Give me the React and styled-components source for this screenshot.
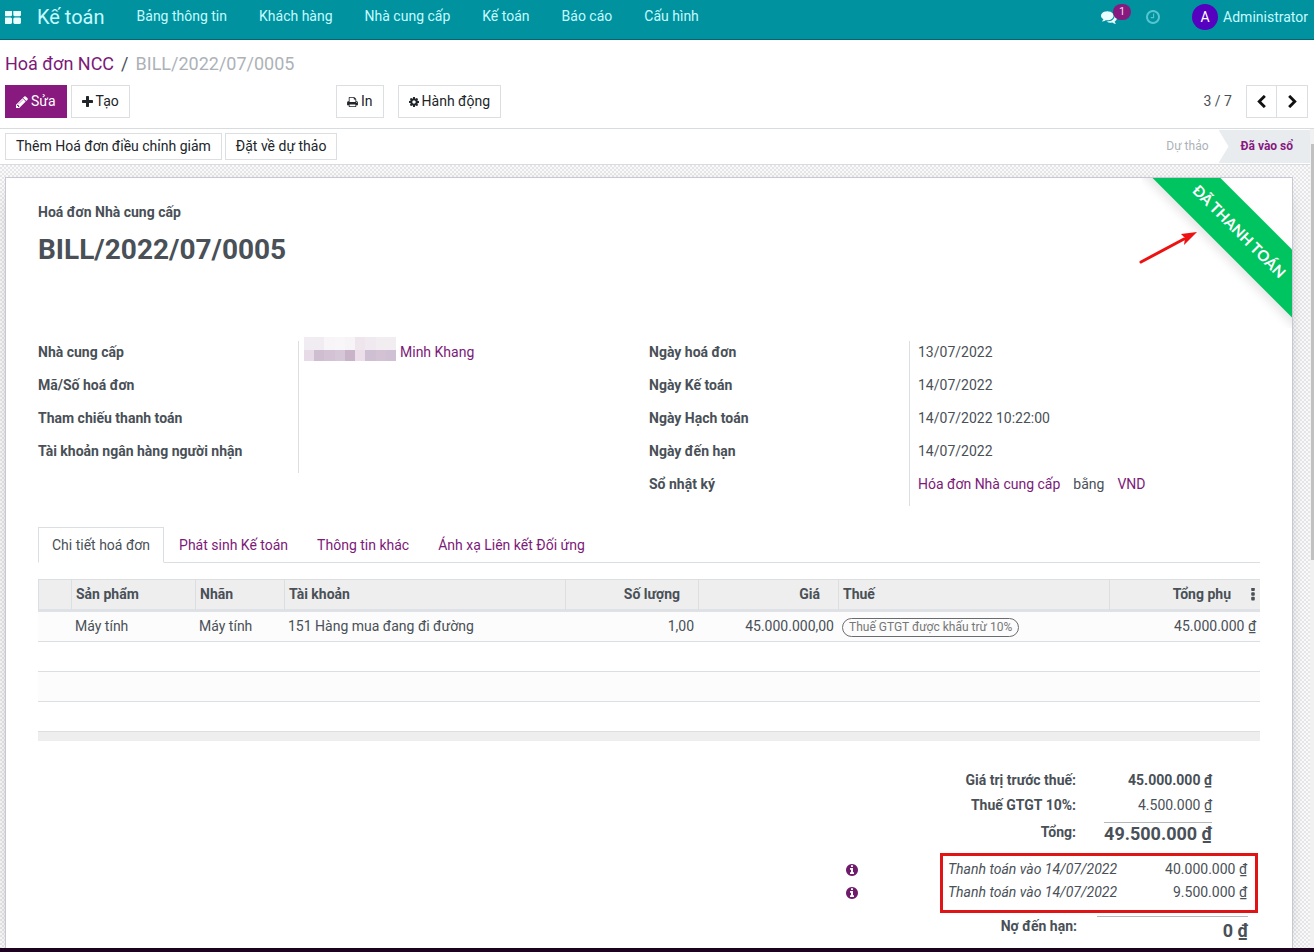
import React from 'react'
import styled, { createGlobalStyle } from 'styled-components'

const GlobalStyle = createGlobalStyle`
  * { box-sizing: border-box; }
  body {
    margin: 0;
    background: #ffffff;
    color: #495057;
    font-family: Roboto, "Noto Sans", sans-serif;
    font-size: 14px;
    line-height: 21px;
  }
  button { font: inherit; cursor: pointer; }
  a { color: #7c1a78; text-decoration: none; }
`

// Font Awesome 4 glyphs, drawn on the 1792 unit grid
const icons = {
  apps: { box: '128 256 1600 1280', d: 'M832 1024v384q0 52-38 90t-90 38h-512q-52 0-90-38t-38-90v-384q0-52 38-90t90-38h512q52 0 90 38t38 90zm0-768v384q0 52-38 90t-90 38h-512q-52 0-90-38t-38-90v-384q0-52 38-90t90-38h512q52 0 90 38t38 90zm896 768v384q0 52-38 90t-90 38h-512q-52 0-90-38t-38-90v-384q0-52 38-90t90-38h512q52 0 90 38t38 90zm0-768v384q0 52-38 90t-90 38h-512q-52 0-90-38t-38-90v-384q0-52 38-90t90-38h512q52 0 90 38t38 90z' },
  comments: { box: '0 256 1792 1408', d: 'M1408 768q0 139-94 257t-256.5 186.5-353.5 68.5q-86 0-176-16-124 88-278 128-36 9-86 16h-3q-11 0-20.5-8t-11.5-21q-1-3-1-6.5t.5-6.5 2-6l2.500-5 3.500-5.500 4-5 4.500-5 4-4.500q5-6 23-25t26-29.500 22.500-29 25-38.500 20.500-44q-124-72-195-177t-71-224q0-139 94-257t256.500-186.500 353.500-68.500 353.500 68.500 256.500 186.500 94 257zm384 256q0 120-71 224.500t-195 176.500q10 24 20.500 44t25 38.500 22.500 29 26 29.500 23 25q1 1 4 4.500t4.500 5 4 5 3.500 5.500l2.500 5 2 6 .5 6.500-1 6.500q-3 14-13 22t-22 7q-50-7-86-16-154-40-278-128-90 16-176 16-271 0-472-132 58 4 88 4 161 0 309-45t264-129q125-92 192-212t67-254q0-77-23-152 129 71 204 178t75 230z' },
  clock: { box: '128 128 1536 1536', d: 'M1024 544v448q0 14-9 23t-23 9h-320q-14 0-23-9t-9-23v-64q0-14 9-23t23-9h224v-352q0-14 9-23t23-9h64q14 0 23 9t9 23zm416 352q0-148-73-273t-198-198-273-73-273 73-198 198-73 273 73 273 198 198 273 73 273-73 198-198 73-273zm224 0q0 209-103 385.5t-279.5 279.5-385.5 103-385.5-103-279.5-279.5-103-385.5 103-385.5 279.5-279.5 385.5-103 385.5 103 279.5 279.5 103 385.5z' },
  pencil: { box: '128 128 1536 1536', d: 'M491 1536l91-91-235-235-91 91v107h128v128h107zm523-928q0-22-22-22-10 0-17 7l-542 542q-7 7-7 17 0 22 22 22 10 0 17-7l542-542q7-7 7-17zm-54-192l416 416-832 832h-416v-416zm683 96q0 53-37 90l-166 166-416-416 166-165q36-38 90-38 53 0 91 38l235 234q37 39 37 91z' },
  plus: { box: '192 128 1408 1408', d: 'M1600 736v192q0 40-28 68t-68 28h-416v416q0 40-28 68t-68 28h-192q-40 0-68-28t-28-68v-416h-416q-40 0-68-28t-28-68v-192q0-40 28-68t68-28h416v-416q0-40 28-68t68-28h192q40 0 68 28t28 68v416h416q40 0 68 28t28 68z' },
  print: { box: '64 128 1664 1536', d: 'M448 1536h896v-256h-896v256zm0-640h896v-384h-160q-40 0-68-28t-28-68v-160h-640v640zm1152 64q0-26-19-45t-45-19-45 19-19 45 19 45 45 19 45-19 19-45zm128 0v416q0 13-9.5 22.5t-22.5 9.5h-224v160q0 40-28 68t-68 28h-960q-40 0-68-28t-28-68v-160h-224q-13 0-22.5-9.5t-9.5-22.5v-416q0-79 56.5-135.5t135.5-56.5h64v-544q0-40 28-68t68-28h672q40 0 88 20t76 48l152 152q28 28 48 76t20 88v256h64q79 0 135.5 56.5t56.5 135.5z' },
  cog: { box: '128 128 1536 1536', d: 'M1152 896q0-106-75-181t-181-75-181 75-75 181 75 181 181 75 181-75 75-181zm512-109v222q0 12-8 23t-20 13l-185 28q-19 54-39 91 35 50 107 138 10 12 10 25t-9 23q-27 37-99 108t-94 71q-12 0-26-9l-138-108q-44 23-91 38-16 136-29 186-7 28-36 28h-222q-14 0-24.5-8.5t-11.5-21.5l-28-184q-49-16-90-37l-141 107q-10 9-25 9-14 0-25-11-126-114-165-168-7-10-7-23 0-12 8-23 15-21 51-66.5t54-70.5q-27-50-41-99l-183-27q-13-2-21-12.5t-8-23.5v-222q0-12 8-23t19-13l186-28q14-46 39-92-40-57-107-138-10-12-10-24 0-10 9-23 26-36 98.5-107.5t94.5-71.5q13 0 26 10l138 107q44-23 91-38 16-136 29-186 7-28 36-28h222q14 0 24.5 8.5t11.5 21.5l28 184q49 16 90 37l142-107q9-9 24-9 13 0 25 10 129 119 165 170 7 8 7 22 0 12-8 23-15 21-51 66.5t-54 70.5q26 50 41 98l183 28q13 2 21 12.5t8 23.5z' },
  left: { box: '410 26 1036 1612', d: 'M1427 301l-531 531 531 531q19 19 19 45t-19 45l-166 166q-19 19-45 19t-45-19l-742-742q-19-19-19-45t19-45l742-742q19-19 45-19t45 19l166 166q19 19 19 45t-19 45z' },
  right: { box: '346 26 1036 1612', d: 'M1363 877l-742 742q-19 19-45 19t-45-19l-166-166q-19-19-19-45t19-45l531-531-531-531q-19-19-19-45t19-45l166-166q19-19 45-19t45 19l742 742q19 19 19 45t-19 45z' },
  info: { box: '128 128 1536 1536', d: 'M1152 1376v-160q0-14-9-23t-23-9h-96v-512q0-14-9-23t-23-9h-320q-14 0-23 9t-9 23v160q0 14 9 23t23 9h96v320h-96q-14 0-23 9t-9 23v160q0 14 9 23t23 9h448q14 0 23-9t9-23zm-128-896v-160q0-14-9-23t-23-9h-192q-14 0-23 9t-9 23v160q0 14 9 23t23 9h192q14 0 23-9t9-23zm640 416q0 209-103 385.5t-279.5 279.5-385.5 103-385.5-103-279.5-279.5-103-385.5 103-385.5 279.5-279.5 385.5-103 385.5 103 279.5 279.5 103 385.5z' },
  more: { box: '704 192 384 1408', d: 'M1088 1248v192q0 40-28 68t-68 28h-192q-40 0-68-28t-28-68v-192q0-40 28-68t68-28h192q40 0 68 28t28 68zm0-512v192q0 40-28 68t-68 28h-192q-40 0-68-28t-28-68v-192q0-40 28-68t68-28h192q40 0 68 28t28 68zm0-512v192q0 40-28 68t-68 28h-192q-40 0-68-28t-28-68v-192q0-40 28-68t68-28h192q40 0 68 28t28 68z' },
}

const Icon = ({ name, width, height }) => (
  <svg width={width} height={height || width} viewBox={icons[name].box} fill="currentColor" aria-hidden="true">
    <path d={icons[name].d} />
  </svg>
)

const menus = ['Bảng thông tin', 'Khách hàng', 'Nhà cung cấp', 'Kế toán', 'Báo cáo', 'Cấu hình']

const tabs = ['Chi tiết hoá đơn', 'Phát sinh Kế toán', 'Thông tin khác', 'Ánh xạ Liên kết Đối ứng']

const payments = [
  { label: 'Thanh toán vào 14/07/2022', amount: '40.000.000 ₫' },
  { label: 'Thanh toán vào 14/07/2022', amount: '9.500.000 ₫' },
]

const mosaicTop = ['#f1ecf1', '#f1ecf1', '#f7f5f8', '#f8f6f9', '#f7f4f8', '#eee6ec', '#f0eaf0', '#f1edf1', '#f1edf1']
const mosaicBottom = ['#e6dbe6', '#cfbdd0', '#d2c2d4', '#d6c7d8', '#c8b3c9', '#ecdfea', '#cfbfd2', '#d2c2d4', '#d0c0d3']

const App = () => {
  return (
    <Shell>
      <GlobalStyle />
      <Navbar>
        <AppsButton aria-label="Ứng dụng"><Icon name="apps" width={16} height={13} /></AppsButton>
        <Brand href="#">Kế toán</Brand>
        <Menu>
          {menus.map((item) => <MenuLink href="#" key={item}>{item}</MenuLink>)}
        </Menu>
        <Systray>
          <Messages aria-label="Tin nhắn">
            <Icon name="comments" width={16} height={13} />
            <Counter>1</Counter>
          </Messages>
          <Activities aria-label="Hoạt động"><Icon name="clock" width={14} /></Activities>
          <User>
            <Avatar>A</Avatar>
            Administrator
          </User>
        </Systray>
      </Navbar>

      <ControlPanel>
        <Breadcrumb>
          <a href="#">Hoá đơn NCC</a>
          <span>/</span>
          <Current>BILL/2022/07/0005</Current>
        </Breadcrumb>
        <Toolbar>
          <Group>
            <Button $primary><Icon name="pencil" width={12} />Sửa</Button>
            <Button><Icon name="plus" width={11} />Tạo</Button>
          </Group>
          <Group $gap={14}>
            <Button><Icon name="print" width={11} height={10} />In</Button>
            <Button><Icon name="cog" width={10} />Hành động</Button>
          </Group>
          <Pager>
            3 / 7
            <PagerButtons>
              <PagerButton aria-label="Trước"><Icon name="left" width={9} height={13} /></PagerButton>
              <PagerButton aria-label="Sau"><Icon name="right" width={9} height={13} /></PagerButton>
            </PagerButtons>
          </Pager>
        </Toolbar>
      </ControlPanel>

      <Content>
        <FormView>
          <Statusbar>
            <StatusButton>Thêm Hoá đơn điều chỉnh giảm</StatusButton>
            <StatusButton>Đặt về dự thảo</StatusButton>
            <Steps>
              <Step>Dự thảo</Step>
              <Step $active>Đã vào sổ</Step>
            </Steps>
          </Statusbar>

          <SheetArea>
            <Sheet>
              <RibbonCorner><Ribbon>ĐÃ THANH TOÁN</Ribbon></RibbonCorner>
              <Arrow width="60" height="36" viewBox="0 0 60 36" aria-hidden="true">
                <path d="M3 33L46 10" stroke="#ee1111" strokeWidth="3" strokeLinecap="round" />
                <path d="M59 3L43 5L47 9L46 16Z" fill="#ee1111" />
              </Arrow>

              <Kind>Hoá đơn Nhà cung cấp</Kind>
              <Title>BILL/2022/07/0005</Title>

              <Groups>
                <Fields>
                  <Label>Nhà cung cấp</Label>
                  <Value $partner>
                    <Mosaic>
                      {[...mosaicTop, ...mosaicBottom].map((color, i) => <i key={i} style={{ background: color }} />)}
                    </Mosaic>
                    <a href="#">Minh Khang</a>
                  </Value>
                  <Label>Mã/Số hoá đơn</Label>
                  <Value />
                  <Label>Tham chiếu thanh toán</Label>
                  <Value />
                  <Label>Tài khoản ngân hàng người nhận</Label>
                  <Value />
                </Fields>
                <Fields>
                  <Label>Ngày hoá đơn</Label>
                  <Value>13/07/2022</Value>
                  <Label>Ngày Kế toán</Label>
                  <Value>14/07/2022</Value>
                  <Label>Ngày Hạch toán</Label>
                  <Value>14/07/2022 10:22:00</Value>
                  <Label>Ngày đến hạn</Label>
                  <Value>14/07/2022</Value>
                  <Label>Sổ nhật ký</Label>
                  <Value>
                    <a href="#">Hóa đơn Nhà cung cấp</a>
                    <span>bằng</span>
                    <a href="#">VND</a>
                  </Value>
                </Fields>
              </Groups>

              <Tabs>
                {tabs.map((tab, i) => <Tab href="#" key={tab} $active={i === 0}>{tab}</Tab>)}
              </Tabs>

              <Lines>
                <colgroup>
                  <Col $w={33} />
                  <Col $w={124} />
                  <Col $w={89} />
                  <Col />
                  <Col $w={133} />
                  <Col $w={140} />
                  <Col $w={271} />
                  <Col $w={128} />
                  <Col $w={23} />
                </colgroup>
                <thead>
                  <tr>
                    <Th />
                    <Th>Sản phẩm</Th>
                    <Th>Nhãn</Th>
                    <Th>Tài khoản</Th>
                    <Th $right>Số lượng</Th>
                    <Th $right>Giá</Th>
                    <Th>Thuế</Th>
                    <Th $right $last>Tổng phụ</Th>
                    <Th $plain>
                      <IconButton aria-label="Cột tuỳ chọn"><Icon name="more" width={4} height={13} /></IconButton>
                    </Th>
                  </tr>
                </thead>
                <tbody>
                  <Row>
                    <Td />
                    <Td>Máy tính</Td>
                    <Td>Máy tính</Td>
                    <Td>151 Hàng mua đang đi đường</Td>
                    <Td $right>1,00</Td>
                    <Td $right>45.000.000,00</Td>
                    <Td><Tag>Thuế GTGT được khấu trừ 10%</Tag></Td>
                    <Td $right colSpan={2}>45.000.000 ₫</Td>
                  </Row>
                  <Row><Td colSpan={9} /></Row>
                  <Row><Td colSpan={9} /></Row>
                  <Row><Td colSpan={9} /></Row>
                </tbody>
                <tfoot>
                  <tr><Foot colSpan={9} /></tr>
                </tfoot>
              </Lines>

              <Totals>
                <TotalRow>
                  <strong>Giá trị trước thuế:</strong>
                  <Amount $bold>45.000.000 ₫</Amount>
                </TotalRow>
                <TotalRow>
                  <strong>Thuế GTGT 10%:</strong>
                  <Amount>4.500.000 ₫</Amount>
                </TotalRow>
                <TotalRow $final>
                  <strong>Tổng:</strong>
                  <BigAmount>49.500.000 ₫</BigAmount>
                </TotalRow>
                <Payments>
                  {payments.map((payment) => (
                    <Payment key={payment.amount}>
                      <InfoButton aria-label="Chi tiết thanh toán"><Icon name="info" width={12} /></InfoButton>
                      <em>{payment.label}</em>
                      <Amount>{payment.amount}</Amount>
                    </Payment>
                  ))}
                  <Highlight />
                </Payments>
                <Due>
                  <strong>Nợ đến hạn:</strong>
                  <BigAmount $wide>0 ₫</BigAmount>
                </Due>
              </Totals>
            </Sheet>
          </SheetArea>
        </FormView>
        <ScrollRail><ScrollThumb /></ScrollRail>
      </Content>
      <BottomEdge />
    </Shell>
  )
}

export default App

const Shell = styled.div`
  display: flex;
  flex-direction: column;
  min-height: 100vh;
`

const Navbar = styled.header`
  display: flex;
  align-items: flex-start;
  height: 40px;
  padding: 0 6px 0 5px;
  background: #00929f;
  border-bottom: 1px solid #08656f;
  color: #c5fbff;
`

const IconButton = styled.button`
  display: flex;
  padding: 0;
  border: 0;
  background: none;
  color: inherit;
`

const AppsButton = styled(IconButton)`
  margin-top: 11px;
  color: #e9feff;
`

const Brand = styled.a`
  margin-left: 16px;
  color: #c5fbff;
  font-size: 20px;
  line-height: 34px;
`

const Menu = styled.nav`
  display: flex;
  gap: 32px;
  margin-left: 32px;
`

const MenuLink = styled.a`
  color: #c5fbff;
  line-height: 32px;
`

const Systray = styled.div`
  display: flex;
  align-items: center;
  height: 34px;
  margin-left: auto;
`

const Messages = styled(IconButton)`
  position: relative;
  color: #e9feff;
`

const Counter = styled.span`
  position: absolute;
  left: 12px;
  top: -7px;
  min-width: 18px;
  height: 16px;
  border-radius: 8px;
  background: #87197f;
  color: #f3d9f1;
  font-size: 11px;
  line-height: 16px;
`

const Activities = styled(IconButton)`
  margin-left: 29px;
  color: #55c6cf;
`

const User = styled.div`
  display: flex;
  align-items: center;
  gap: 5px;
  margin-left: 32px;
  line-height: 32px;
`

const Avatar = styled.span`
  width: 26px;
  height: 26px;
  border-radius: 50%;
  background: #5600c0;
  color: #ffffff;
  line-height: 26px;
  text-align: center;
`

const ControlPanel = styled.div`
  padding: 10px 6px 10px 5px;
  border-bottom: 1px solid #d9dcdf;
`

const Breadcrumb = styled.div`
  display: flex;
  gap: 7px;
  font-size: 18px;
  line-height: 28px;
`

const Current = styled.span`
  color: #adb2b8;
`

const Toolbar = styled.div`
  display: grid;
  grid-template-columns: 331px 1fr auto;
  margin-top: 7px;
`

const Group = styled.div`
  display: flex;
  gap: ${(p) => p.$gap || 4}px;
`

const Button = styled.button`
  display: flex;
  align-items: center;
  gap: 3px;
  height: 33px;
  padding: 0 10px;
  border: 1px solid ${(p) => (p.$primary ? '#87197f' : '#dcdfe1')};
  background: ${(p) => (p.$primary ? '#87197f' : '#ffffff')};
  color: ${(p) => (p.$primary ? '#ffffff' : '#212529')};
`

const Pager = styled.div`
  display: flex;
  align-items: center;
  gap: 14px;
`

const PagerButtons = styled.div`
  display: flex;
`

const PagerButton = styled(IconButton)`
  align-items: center;
  justify-content: center;
  width: 31px;
  height: 33px;
  border: 1px solid #dcdfe1;
  color: #111111;

  & + & {
    border-left: 0;
  }
`

const Content = styled.div`
  display: flex;
  flex: 1;
`

const FormView = styled.main`
  display: flex;
  flex: 1;
  flex-direction: column;
`

const Statusbar = styled.div`
  display: flex;
  align-items: center;
  gap: 3px;
  height: 36px;
  padding-left: 5px;
  border-bottom: 1px solid #d9dcdf;
`

const StatusButton = styled.button`
  height: 27px;
  padding: 0 10px;
  border: 1px solid #dcdfe1;
  background: #ffffff;
  color: #212529;
`

const Steps = styled.div`
  display: flex;
  margin-left: auto;
  font-size: 12px;
  line-height: 33px;
`

const Step = styled.span`
  padding: ${(p) => (p.$active ? '0 17px 0 22px' : '0 10px')};
  background: ${(p) => (p.$active ? '#e9ecef' : 'transparent')};
  clip-path: ${(p) => (p.$active ? 'polygon(0 0, 100% 0, 100% 100%, 0 100%, 10px 50%)' : 'none')};
  color: ${(p) => (p.$active ? '#87197f' : '#adb2b8')};
  font-weight: ${(p) => (p.$active ? 700 : 400)};
`

const SheetArea = styled.div`
  display: flex;
  flex: 1;
  padding: 12px 17px 0 5px;
  background: repeating-conic-gradient(#e6e6e8 0 25%, #fafafa 0 50%) 0 0 / 4px 4px;
`

const Sheet = styled.section`
  position: relative;
  flex: 1;
  padding: 24px 32px 1px;
  border: 1px solid #c8c8d3;
  border-bottom: 0;
  background: #ffffff;
  box-shadow: 0 5px 20px -15px #000000;
`

const RibbonCorner = styled.div`
  position: absolute;
  top: 0;
  right: 0;
  width: 150px;
  height: 150px;
  overflow: hidden;
`

const Ribbon = styled.span`
  position: absolute;
  top: 29px;
  right: -60px;
  width: 225px;
  background: #00c45f;
  box-shadow: 0 5px 10px rgba(0, 0, 0, 0.1);
  color: #ffffff;
  font-family: Lato, sans-serif;
  font-size: 15px;
  font-weight: 700;
  line-height: 48px;
  text-align: center;
  transform: rotate(45deg);
`

const Arrow = styled.svg`
  position: absolute;
  top: 51px;
  right: 94px;
  fill: none;
`

const Kind = styled.div`
  font-weight: 700;
`

const Title = styled.h1`
  margin: 6px 0 70px;
  font-size: 28px;
  line-height: 42px;
`

const Groups = styled.div`
  display: grid;
  grid-template-columns: 1fr 1fr;
  align-items: start;
`

const Fields = styled.dl`
  display: grid;
  grid-template-columns: 260px 1fr;
  margin: 0;
`

const Label = styled.dt`
  height: 33px;
  padding-top: 1px;
  font-weight: 700;
`

const Value = styled.dd`
  display: flex;
  align-items: flex-start;
  gap: ${(p) => (p.$partner ? 4 : 13)}px;
  height: 33px;
  margin: 0;
  padding-top: 1px;
  padding-left: ${(p) => (p.$partner ? 5 : 8)}px;
  border-left: 1px solid #dcdfe1;
`

// pixelated block over the partner's first names
const Mosaic = styled.span`
  display: grid;
  grid-template-columns: repeat(9, 1fr);
  grid-template-rows: 13px 11px;
  width: 92px;
  margin-top: -5px;
`

const Tabs = styled.nav`
  display: flex;
  gap: 1px;
  margin-top: 21px;
  border-bottom: 1px solid #dcdfe1;
`

const Tab = styled.a`
  margin-bottom: -1px;
  padding: 0 13px;
  border: 1px solid ${(p) => (p.$active ? '#dcdfe1' : 'transparent')};
  border-bottom-color: ${(p) => (p.$active ? '#ffffff' : 'transparent')};
  color: ${(p) => (p.$active ? '#495057' : '#7c1a78')};
  line-height: 34px;
`

const Lines = styled.table`
  width: 100%;
  margin-top: 16px;
  border-collapse: separate;
  border-spacing: 0;
  table-layout: fixed;
`

const Col = styled.col`
  width: ${(p) => (p.$w ? p.$w + 'px' : 'auto')};
`

const Th = styled.th`
  height: 33px;
  padding: 0 ${(p) => (p.$right ? (p.$last ? 6 : 18) : 4)}px 0 ${(p) => (p.$plain ? 14 : 4)}px;
  border-top: 1px solid #dcdfe1;
  border-bottom: 3px solid #dee2e6;
  border-left: ${(p) => (p.$plain ? '0' : '1px solid #dcdfe1')};
  background: #eeeeee;
  font-weight: 700;
  text-align: ${(p) => (p.$right ? 'right' : 'left')};
`

const Row = styled.tr`
  height: 30px;

  &:nth-child(odd) {
    background: #fcfcfc;
  }
`

const Td = styled.td`
  padding: 0 4px;
  border-bottom: 1px solid #dcdfe1;
  text-align: ${(p) => (p.$right ? 'right' : 'left')};
`

const Tag = styled.span`
  display: inline-block;
  padding: 0 6px;
  border: 1px solid #6a6d70;
  border-radius: 10px;
  color: #777777;
  font-size: 12px;
  line-height: 17px;
  vertical-align: middle;
`

const Foot = styled.td`
  height: 9px;
  padding: 0;
  background: #eeeeee;
`

const Totals = styled.div`
  display: flex;
  flex-direction: column;
  align-items: flex-end;
  margin-top: 29px;
`

const TotalRow = styled.div`
  display: flex;
  gap: 28px;
  height: ${(p) => (p.$final ? 22 : 25)}px;
  margin-top: ${(p) => (p.$final ? 2 : 0)}px;
  margin-right: 48px;
`

const Amount = styled.span`
  min-width: 108px;
  font-weight: ${(p) => (p.$bold ? 700 : 400)};
  text-align: right;
`

const BigAmount = styled(Amount)`
  min-width: ${(p) => (p.$wide ? 151 : 108)}px;
  border-top: 1px solid #b5b8bb;
  font-size: 18px;
  font-weight: 700;
  line-height: ${(p) => (p.$wide ? 28 : 21)}px;
`

const Payments = styled.div`
  position: relative;
  margin: 14px 13px 0 0;
`

const Payment = styled.div`
  display: flex;
  align-items: center;
  line-height: 23px;

  em {
    width: 175px;
    margin: 0 16px 0 90px;
  }
`

const InfoButton = styled(IconButton)`
  color: #6f1a6b;
`

// red frame round the payment lines
const Highlight = styled.div`
  position: absolute;
  inset: -5px -11px -9px 94px;
  border: 3px solid #e01414;
  pointer-events: none;
`

const Due = styled.div`
  display: flex;
  gap: 20px;
  margin: 12px 12px 0 0;
`

const ScrollRail = styled.div`
  width: 4px;
  padding: 15px 0 0 1px;
  background: #f1f1f1;
`

const ScrollThumb = styled.div`
  height: 416px;
  background: #c1c1c1;
`

const BottomEdge = styled.div`
  height: 4px;
  background: #1e0420;
`
